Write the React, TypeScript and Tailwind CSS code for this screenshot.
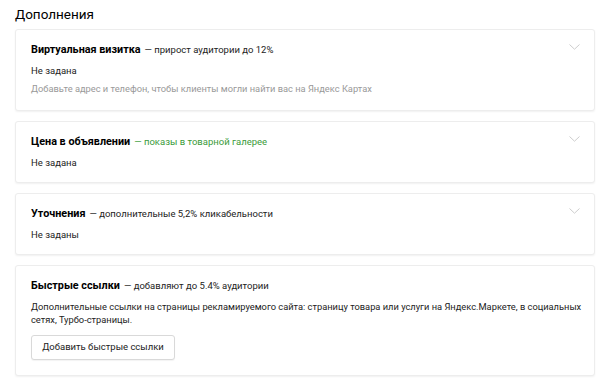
import React from 'react';

const Chevron = () => (
  <svg width="11" height="6" viewBox="0 0 11 6" fill="none" className="shrink-0">
    <path d="M0.5 0.5 L5.5 5.2 L10.5 0.5" stroke="#cdcdcd" strokeWidth="1" />
  </svg>
);

interface CardProps {
  title: string;
  hint: string;
  hintGreen?: boolean;
  collapsible?: boolean;
  children: React.ReactNode;
  className?: string;
}

const Card: React.FC<CardProps> = ({ title, hint, hintGreen, collapsible = true, children, className = '' }) => (
  <div
    className={`rounded-[3px] border border-[#ededed] bg-white pl-[15px] pr-[12px] pt-[12px] shadow-[0_1px_2px_rgba(0,0,0,0.06)] ${className}`}
  >
    <div className="flex h-4 items-center justify-between">
      <div className="flex items-baseline">
        <span className="text-[10.8px] font-bold leading-4 text-[#000]">{title}</span>
        <span className={`ml-[4px] text-[9.5px] leading-4 ${hintGreen ? 'text-[#3a9b3a]' : 'text-[#222]'}`}>
          — {hint}
        </span>
      </div>
      {collapsible && (
        <div className="-mt-[6px] mr-[2px]">
          <Chevron />
        </div>
      )}
    </div>
    {children}
  </div>
);

export default function App() {
  return (
    <div
      className="min-h-[383px] w-[596px] bg-white pl-[15px] pr-[1px]"
      style={{ fontFamily: 'Roboto, "Noto Sans", sans-serif' }}
    >
      <h1 className="pt-[4px] text-[13.5px] leading-[20px] text-[#000]">Дополнения</h1>

      <div className="mt-[5px] flex flex-col gap-[10px]">
        <Card title="Виртуальная визитка" hint="прирост аудитории до 12%" className="pb-[13px]">
          <div className="mt-[5px] text-[9.5px] leading-4 text-[#222]">Не задана</div>
          <div className="mt-[2px] text-[9.3px] leading-4 text-[#999]">
            Добавьте адрес и телефон, чтобы клиенты могли найти вас на Яндекс Картах
          </div>
        </Card>

        <Card title="Цена в объявлении" hint="показы в товарной галерее" hintGreen className="pb-[11px]">
          <div className="mt-[5px] text-[9.5px] leading-4 text-[#222]">Не задана</div>
        </Card>

        <Card title="Уточнения" hint="дополнительные 5,2% кликабельности" className="pb-[11px]">
          <div className="mt-[5px] text-[9.5px] leading-4 text-[#222]">Не заданы</div>
        </Card>

        <Card title="Быстрые ссылки" hint="добавляют до 5.4% аудитории" collapsible={false} className="pb-[15px]">
          <div className="mt-[6px] text-[9.3px] leading-[13px] text-[#222]">
            Дополнительные ссылки на страницы рекламируемого сайта: страницу товара или услуги на Яндекс.Маркете, в
            социальных сетях, Турбо-страницы.
          </div>
          <button
            type="button"
            className="mt-[9px] h-[25px] w-[144px] rounded-[3px] border border-[#d9d9d9] bg-white text-[9.5px] text-[#222] shadow-[0_1px_1px_rgba(0,0,0,0.05)]"
          >
            Добавить быстрые ссылки
          </button>
        </Card>
      </div>
    </div>
  );
}
